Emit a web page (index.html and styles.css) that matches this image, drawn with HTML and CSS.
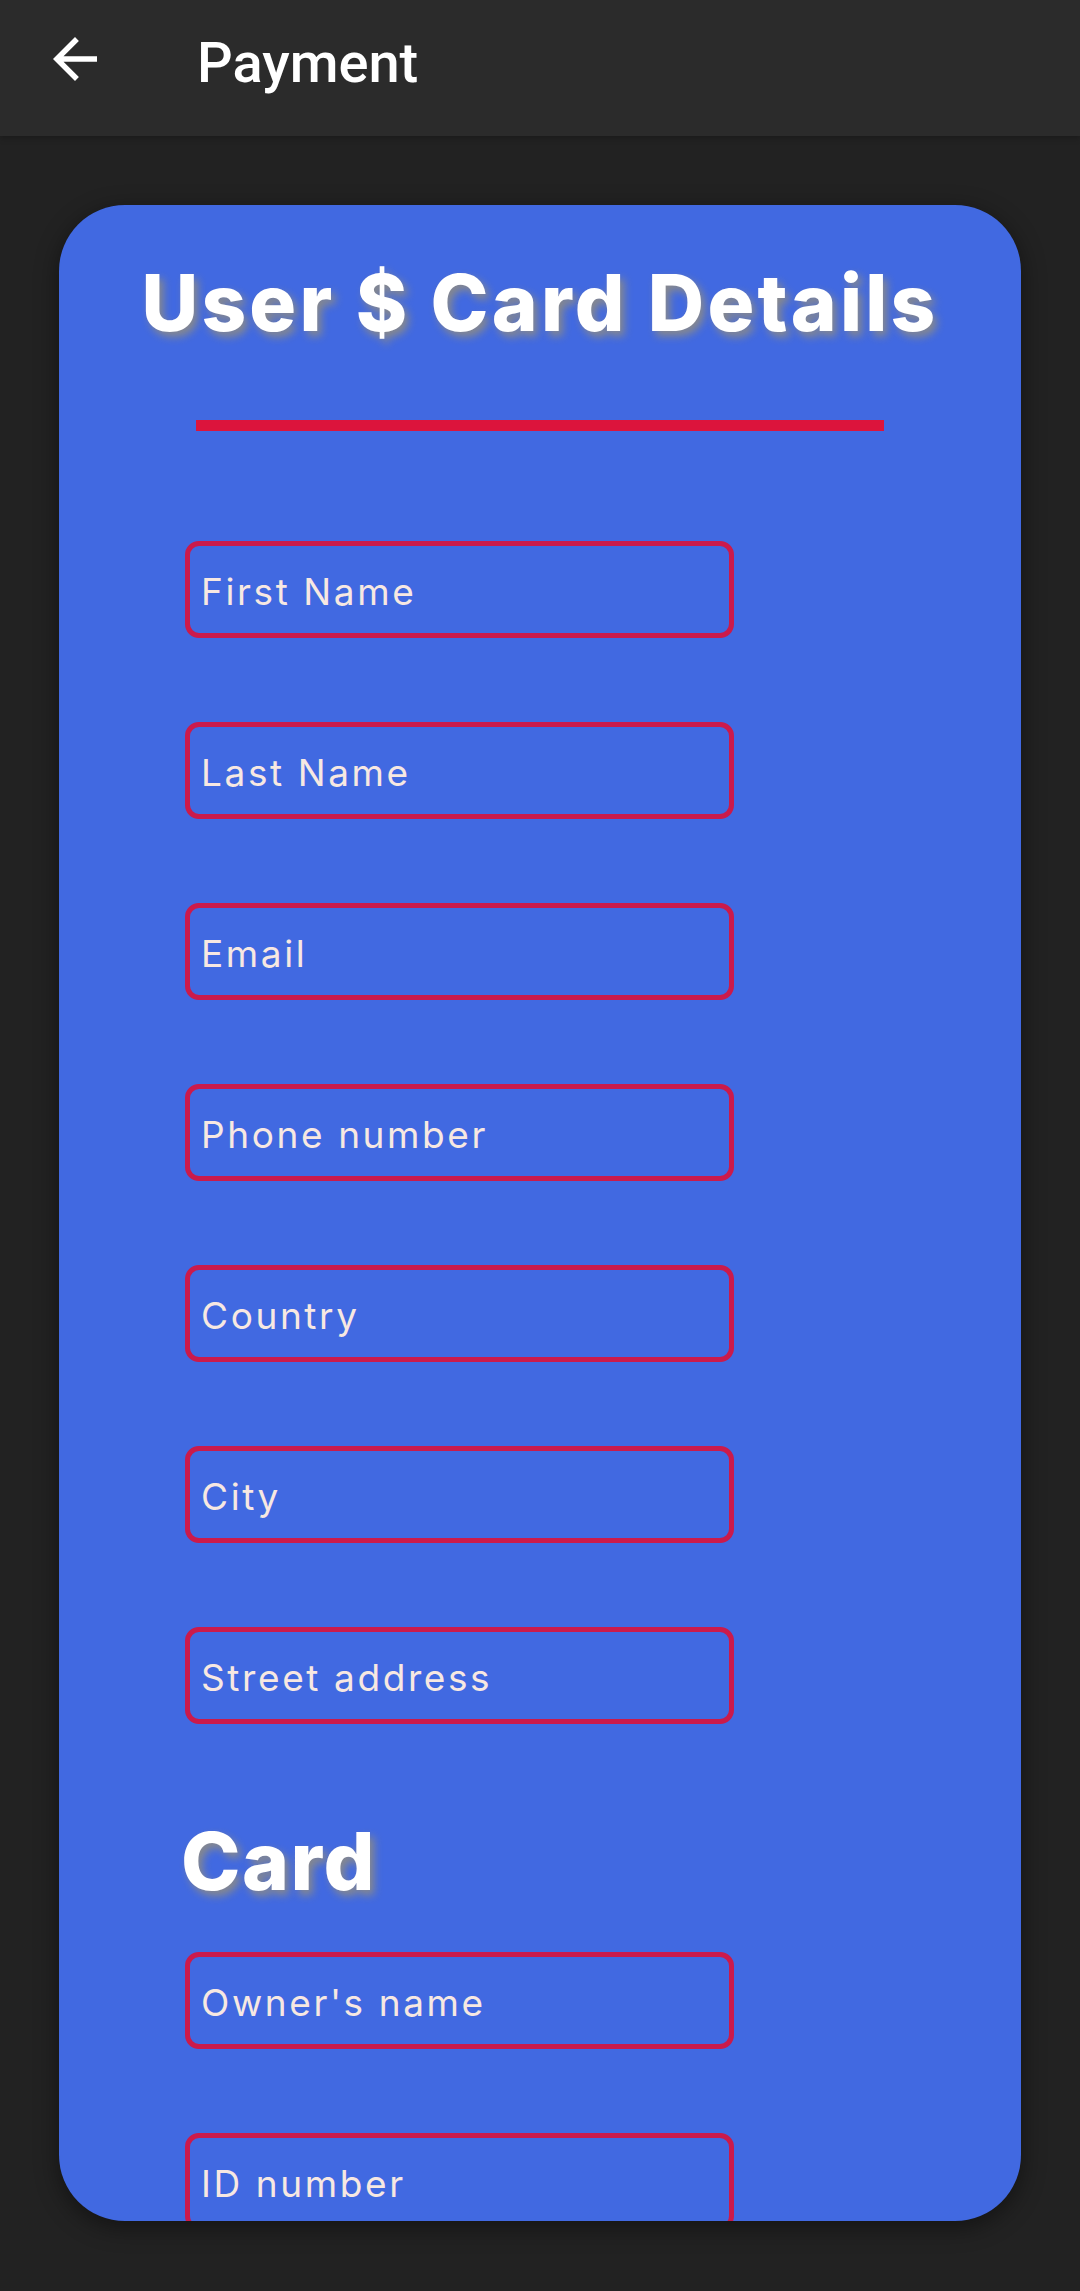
FILE: index.html
```html
<!DOCTYPE html>
<html lang="en">
<head>
<meta charset="utf-8">
<title>Payment</title>
<link rel="stylesheet" href="styles.css">
</head>
<body>
<header class="toolbar">
  <button class="back" aria-label="Back">
    <svg viewBox="0 0 24 24" width="66" height="66"><path fill="#ffffff" d="M20 11H7.83l5.59-5.59L12 4l-8 8 8 8 1.41-1.41L7.83 13H20v-2z"/></svg>
  </button>
  <h1 class="toolbar-title">Payment</h1>
</header>
<main class="page">
  <section class="card">
    <h2 class="card-title">User $ Card Details</h2>
    <div class="divider"></div>
    <div class="fields">
      <div class="field"><span class="hint">First Name</span></div>
      <div class="field"><span class="hint">Last Name</span></div>
      <div class="field"><span class="hint">Email</span></div>
      <div class="field"><span class="hint">Phone number</span></div>
      <div class="field"><span class="hint">Country</span></div>
      <div class="field"><span class="hint">City</span></div>
      <div class="field"><span class="hint">Street address</span></div>
    </div>
    <h3 class="section-title">Card</h3>
    <div class="fields fields-card">
      <div class="field"><span class="hint">Owner's name</span></div>
      <div class="field"><span class="hint">ID number</span></div>
    </div>
  </section>
</main>
</body>
</html>
```

FILE: styles.css
```css
html, body {
  margin: 0;
  padding: 0;
}
body {
  width: 1080px;
  height: 2291px;
  overflow: hidden;
  background: #222222;
  font-family: "Inter", "Roboto", sans-serif;
}
.toolbar {
  height: 136px;
  box-sizing: border-box;
  padding: 0 0 10px 42px;
  background: #2b2b2b;
  display: flex;
  align-items: center;
  box-shadow: 0 2px 6px rgba(0,0,0,0.25);
  position: relative;
  z-index: 1;
}
.back {
  width: 66px;
  height: 66px;
  padding: 0;
  margin: 0 0 8px 0;
  border: 0;
  background: none;
  display: flex;
}
.toolbar-title {
  margin: 0 0 0 89px;
  font-family: "Roboto", sans-serif;
  font-weight: 500;
  font-size: 56px;
  color: #ffffff;
  line-height: normal;
}
.page {
  padding: 69px 59px 0 59px;
}
.card {
  height: 2016px;
  box-sizing: border-box;
  background: #4169e1;
  border-radius: 66px;
  overflow: hidden;
  padding-top: 48px;
  box-shadow: 0 6px 24px rgba(0,0,0,0.45);
  display: flex;
  flex-direction: column;
}
.card > * {
  flex-shrink: 0;
}
.card-title {
  margin: 0;
  height: 100px;
  line-height: 100px;
  text-align: center;
  font-family: "Inter", sans-serif;
  font-weight: 800;
  font-size: 78px;
  letter-spacing: 3.2px;
  color: #ffffff;
  text-shadow: 4px 5px 9px #8a8a8a;
  white-space: nowrap;
}
.divider {
  align-self: center;
  width: 688px;
  height: 11px;
  margin-top: 67px;
  background: #dc143c;
}
.fields {
  margin-top: 110px;
  padding-left: 126px;
  display: flex;
  flex-direction: column;
  gap: 84px;
}
.fields-card {
  margin-top: 41px;
}
.field {
  flex-shrink: 0;
  width: 549px;
  height: 97px;
  box-sizing: border-box;
  border: 5px solid #cb1a4b;
  border-radius: 14px;
  padding-left: 11px;
  display: flex;
  align-items: center;
}
.hint {
  font-family: "Inter", sans-serif;
  font-weight: 400;
  font-size: 37px;
  letter-spacing: 2.6px;
  color: #f7e8e2;
  margin-top: 4px;
  white-space: nowrap;
}
.section-title {
  margin: 87px 0 0 122px;
  height: 100px;
  line-height: 100px;
  font-family: "Inter", sans-serif;
  font-weight: 800;
  font-size: 80px;
  letter-spacing: 1.5px;
  color: #ffffff;
  text-shadow: 4px 5px 9px #8a8a8a;
}
```
